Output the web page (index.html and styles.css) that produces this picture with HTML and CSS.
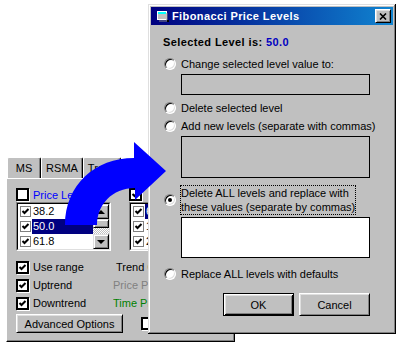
FILE: index.html
```html
<!DOCTYPE html>
<html lang="en">
<head>
  <meta charset="UTF-8">
  <meta name="viewport" content="width=device-width, initial-scale=1.0">
  <title>Fibonacci Price Levels</title>
  <link rel="stylesheet" href="styles.css">
</head>
<body>
  <div class="desk">

    <!-- settings window behind the dialog -->
    <div class="backwin">
      <div class="tabs">
        <span class="tab tab-ms">MS</span>
        <span class="tab tab-rsma">RSMA</span>
        <span class="tab tab-trend">Trend</span>
      </div>
      <div class="panel">
        <div class="groups">
          <div class="group">
            <div class="chk"><span class="box"></span><span class="blue">Price Levels</span></div>
            <div class="list">
              <div class="list-in">
                <div class="rows">
                  <div class="row"><span class="mini"><svg viewBox="0 0 9 9"><path d="M1.5 4l2 2 4-4"/></svg></span><span class="val">38.2</span></div>
                  <div class="row sel"><span class="mini"><svg viewBox="0 0 9 9"><path d="M1.5 4l2 2 4-4"/></svg></span><span class="val">50.0</span></div>
                  <div class="row"><span class="mini"><svg viewBox="0 0 9 9"><path d="M1.5 4l2 2 4-4"/></svg></span><span class="val">61.8</span></div>
                </div>
                <div class="vscroll">
                  <span class="sbtn up"></span>
                  <span class="thumb"></span>
                  <span class="track"></span>
                  <span class="sbtn down"></span>
                </div>
              </div>
            </div>
          </div>
          <div class="group group-cut">
            <div class="chk"><span class="box"><svg viewBox="0 0 9 9"><path d="M1.5 4l2 2 4-4"/></svg></span></div>
            <div class="list">
              <div class="list-in">
                <div class="rows">
                  <div class="row sel"><span class="mini"><svg viewBox="0 0 9 9"><path d="M1.5 4l2 2 4-4"/></svg></span><span class="val">6</span></div>
                  <div class="row"><span class="mini"><svg viewBox="0 0 9 9"><path d="M1.5 4l2 2 4-4"/></svg></span><span class="val">1</span></div>
                  <div class="row"><span class="mini"><svg viewBox="0 0 9 9"><path d="M1.5 4l2 2 4-4"/></svg></span><span class="val">2</span></div>
                </div>
              </div>
            </div>
          </div>
        </div>

        <div class="opts">
          <div class="chk"><span class="box"><svg viewBox="0 0 9 9"><path d="M1.5 4l2 2 4-4"/></svg></span><span>Use range</span></div>
          <span class="lbl lbl-trend">Trend Channels</span>
          <div class="chk"><span class="box"><svg viewBox="0 0 9 9"><path d="M1.5 4l2 2 4-4"/></svg></span><span>Uptrend</span></div>
          <span class="lbl grey">Price Projections</span>
          <div class="chk"><span class="box"><svg viewBox="0 0 9 9"><path d="M1.5 4l2 2 4-4"/></svg></span><span>Downtrend</span></div>
          <span class="lbl green">Time Projections</span>
        </div>

        <div class="bottom">
          <button class="btn btn-adv">Advanced Options</button>
          <span class="box"></span>
        </div>
      </div>
    </div>

    <!-- dialog -->
    <div class="dialog">
      <div class="titlebar">
        <svg class="ticon" viewBox="0 0 12 11">
          <rect x="0.5" y="0.5" width="9" height="8" fill="#c0c0c0" stroke="#fff"/>
          <rect x="1" y="1" width="8" height="2" fill="#00ffff"/>
          <path d="M10 2v8H2" fill="none" stroke="#808080"/>
          <rect x="10" y="9" width="2" height="2" fill="#000"/>
        </svg>
        <span class="ttext">Fibonacci Price Levels</span>
        <span class="close"><svg viewBox="0 0 8 7"><path d="M1 0.5l6 6M7 0.5l-6 6"/></svg></span>
      </div>

      <div class="dbody">
        <div class="dhead">Selected Level is: <span class="num">50.0</span></div>

        <div class="opt opt1"><span class="radio"></span><span>Change selected level value to:</span></div>
        <div class="tb tb1"></div>

        <div class="opt opt2"><span class="radio"></span><span>Delete selected level</span></div>
        <div class="opt opt3"><span class="radio"></span><span>Add new levels (separate with commas)</span></div>
        <div class="tb tb2"></div>

        <div class="opt opt4"><span class="radio on"></span>
          <div class="focus">
            <div>Delete ALL levels and replace with</div>
            <div>these values (separate by commas)</div>
          </div>
        </div>
        <div class="tb tb3"></div>

        <div class="opt opt5"><span class="radio"></span><span>Replace ALL levels with defaults</span></div>

        <div class="actions">
          <button class="btn btn-def">OK</button>
          <button class="btn">Cancel</button>
        </div>
      </div>
    </div>

    <!-- big blue arrow drawn over both windows -->
    <svg class="arrow" viewBox="0 0 404 348">
      <path d="M65 225C65 185 95 158 134 158L134 142L166 171L135 200L135 188C112 188 97 205 97 225Z"/>
    </svg>
  </div>
</body>
</html>
```

FILE: styles.css
```css
* {box-sizing: border-box;}
body {margin: 0; background: #fff; color: #000; font: 11px "Liberation Sans", Arial, sans-serif;}
.desk {position: relative; width: 404px; height: 348px; overflow: hidden;}

/* back window */
.backwin {position: absolute; left: 6px; top: 157px; width: 229px; height: 185px; display: flex; flex-direction: column;}
.tabs {display: flex; height: 21px; padding-left: 1px;}
.tab {height: 21px; line-height: 20px; text-align: center; background: #c0c0c0; border-top: 1px solid #fff; border-left: 1px solid #fff; border-right: 1px solid #000; box-shadow: inset -1px 0 #808080; border-radius: 2px 2px 0 0;}
.tab-ms {width: 34px;}
.tab-rsma {width: 42px;}
.tab-trend {width: 38px;}
.panel {flex: 1; background: #c0c0c0; border: 1px solid; border-color: #fff #000 #000 #fff; box-shadow: inset -1px -1px #808080; padding: 9px 0 0 9px;}

.groups {display: flex; gap: 18px;}
.group {width: 95px;}
.group-cut {width: 19px; overflow: hidden;}
.group-cut .list {width: 40px;}
.chk {display: flex; align-items: center; gap: 4px; height: 13px; white-space: nowrap;}
.box {width: 13px; height: 13px; flex: none; background: #fff; border: 2px solid #000; box-shadow: 1px 1px #fff; display: flex; align-items: center; justify-content: center;}
.box svg, .mini svg {width: 9px; height: 9px; fill: none; stroke: #000; stroke-width: 2;}
.blue {color: #0000ff;}

.list {margin-top: 1px; height: 49px; border: 1px solid; border-color: #808080 #fff #fff #808080;}
.list-in {height: 100%; display: flex; background: #fff; border: 1px solid; border-color: #000 #dfdfdf #dfdfdf #000;}
.rows {flex: 1; overflow: hidden;}
.row {display: flex; align-items: center; height: 15px; padding-left: 2px;}
.mini {width: 11px; height: 11px; flex: none; margin-right: 1px; border: 1px solid #808080; background: #fff; display: flex; align-items: center; justify-content: center;}
.val {flex: 1; height: 15px; line-height: 15px; padding-left: 1px; white-space: nowrap;}
.sel .val {background: #000080; color: #fff;}

.vscroll {width: 16px; display: flex; flex-direction: column;}
.sbtn, .thumb {background: #c0c0c0; border: 1px solid; border-color: #dfdfdf #000 #000 #dfdfdf; box-shadow: inset 1px 1px #fff, inset -1px -1px #808080;}
.sbtn {height: 15px; display: flex; align-items: center; justify-content: center;}
.sbtn::after {content: ""; border-left: 4px solid transparent; border-right: 4px solid transparent;}
.up::after {border-bottom: 4px solid #000;}
.down::after {border-top: 4px solid #000;}
.thumb {height: 9px;}
.track {flex: 1; background: repeating-conic-gradient(#fff 0 25%, #c0c0c0 0 50%) 0 0 / 2px 2px;}

/* labels are clipped where the dialog starts */
.opts {margin-top: 7px; display: grid; grid-template-columns: 97px 35px; grid-auto-rows: 18px; align-items: center;}
.lbl {white-space: nowrap; overflow: hidden;}
.lbl-trend {padding-left: 3px;}
.grey {color: #808080;}
.green {color: #008000;}

.bottom {display: flex; align-items: center; gap: 18px; margin-top: 2px;}
.btn {font: inherit; color: #000; background: #c0c0c0; padding: 0; border: 1px solid; border-color: #fff #000 #000 #fff; box-shadow: inset 1px 1px #dfdfdf, inset -1px -1px #808080;}
.btn-adv {width: 107px; height: 19px;}

/* dialog */
.dialog {position: absolute; left: 148px; top: 4px; width: 248px; height: 330px; padding: 3px; background: #c0c0c0; box-shadow: inset -1px -1px #000, inset 1px 1px #dfdfdf, inset -2px -2px #808080, inset 2px 2px #fff;}
.titlebar {height: 18px; display: flex; align-items: center; padding: 0 2px 0 6px; background: linear-gradient(90deg, #000080, #1084d0); color: #fff; font-weight: bold; letter-spacing: 0.4px;}
.ticon {width: 12px; height: 11px; margin-right: 3px; flex: none;}
.ttext {flex: 1; white-space: nowrap;}
.close {width: 16px; height: 14px; display: flex; align-items: center; justify-content: center; background: #c0c0c0; border: 1px solid; border-color: #fff #000 #000 #fff; box-shadow: inset 1px 1px #dfdfdf, inset -1px -1px #808080;}
.close svg {width: 8px; height: 7px; stroke: #000; stroke-width: 1.6;}

.dbody {padding: 10px 0 0 12px;}
.dhead {line-height: 14px; font-weight: bold; letter-spacing: 0.4px;}
.num {color: #0000c0;}

.opt {display: flex; align-items: center; line-height: 14px; white-space: nowrap;}
.radio {width: 12px; height: 12px; flex: none; margin: 0 5px 0 1px; border-radius: 50%; background: #fff; border: 1px solid; border-color: #808080 #fff #fff #808080; box-shadow: inset 1px 1px #000, inset -1px -1px #dfdfdf; display: flex; align-items: center; justify-content: center;}
.radio.on::after {content: ""; width: 4px; height: 4px; border-radius: 50%; background: #000;}
.focus {border: 1px dotted #000; margin-left: -1px;}

.opt1 {margin-top: 8px;}
.opt2 {margin-top: 6px;}
.opt3 {margin-top: 4px;}
.opt4 {margin-top: 7px;}
.opt5 {margin-top: 9px;}

.tb {margin-left: 18px; width: 189px; border: 1px solid #000; background: #c0c0c0;}
.tb1 {margin-top: 3px; height: 21px;}
.tb2 {margin-top: 3px; height: 42px;}
.tb3 {margin-top: 2px; height: 41px; background: #fff;}

.actions {display: flex; gap: 5px; margin-top: 12px; padding-left: 60px;}
.actions .btn {width: 71px; height: 23px;}
.btn-def {border-color: #000; box-shadow: inset 1px 1px #fff, inset -1px -1px #000, inset 2px 2px #dfdfdf, inset -2px -2px #808080;}

.arrow {position: absolute; left: 0; top: 0; width: 404px; height: 348px; fill: #0000ff; pointer-events: none;}
```
